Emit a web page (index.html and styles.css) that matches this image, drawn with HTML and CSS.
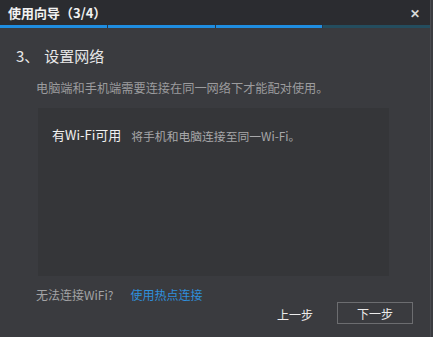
FILE: index.html
```html
<!DOCTYPE html>
<html lang="zh-CN">
<head>
    <meta charset="UTF-8">
    <meta name="viewport" content="width=device-width, initial-scale=1.0">
    <title>使用向导</title>
    <link rel="stylesheet" href="styles.css">
</head>
<body>
    <div class="dialog">
        <div class="titlebar">
            <span class="title">使用向导（3/4）</span>
            <span class="close">✕</span>
        </div>
        <div class="progress">
            <div class="step done"></div>
            <div class="step done"></div>
            <div class="step done"></div>
            <div class="step"></div>
        </div>
        <div class="content">
            <div class="heading"><span class="num">3、</span>设置网络</div>
            <div class="desc">电脑端和手机端需要连接在同一网络下才能配对使用。</div>
            <div class="panel">
                <div class="option">
                    <span class="option-title">有Wi-Fi可用</span>
                    <span class="option-text">将手机和电脑连接至同一Wi-Fi。</span>
                </div>
            </div>
            <div class="help">无法连接WiFi?<a class="link" href="#">使用热点连接</a></div>
            <div class="actions">
                <button class="btn btn-plain">上一步</button>
                <button class="btn btn-box">下一步</button>
            </div>
        </div>
    </div>
</body>
</html>
```

FILE: styles.css
```css
body {
    margin: 0;
    background-color: #3a3b3f;
    font-family: "Noto Sans CJK SC", "Noto Sans", sans-serif;
    color: #e6e6e6;
}
.dialog {
    width: 430px;
    height: 337px;
    border-right: 1px solid #4a4b50;
    background-color: #3a3b3f;
}
.titlebar {
    height: 25px;
    background-color: #2b2c30;
    display: flex;
    align-items: center;
    justify-content: space-between;
    padding: 0 8px 0 8px;
}
.title {
    font-size: 13px;
    font-weight: bold;
    color: #f2f2f2;
    line-height: 25px;
}
.close {
    font-size: 12px;
    font-weight: bold;
    color: #d8d8d8;
    margin-right: 2px;
}
.progress {
    display: grid;
    grid-template-columns: repeat(4, 1fr);
    gap: 1px;
    height: 3px;
    background-color: #27384a;
}
.step {
    background-color: #244d5e;
}
.step.done {
    background-color: #1f8de0;
}
.content {
    padding: 18px 17px 0 16px;
}
.heading {
    font-size: 15px;
    line-height: 20px;
    color: #e8e8e8;
}
.num {
    margin-right: 5px;
}
.desc {
    margin: 14px 0 0 20px;
    font-size: 12.2px;
    line-height: 16px;
    color: #9c9c9e;
}
.panel {
    margin: 12px 0 0 22px;
    width: 351px;
    height: 168px;
    background-color: #353639;
}
.option {
    padding: 17px 0 0 14px;
    display: flex;
    align-items: center;
}
.option-title {
    font-size: 13px;
    line-height: 20px;
    color: #f0f0f0;
    margin-right: 10px;
}
.option-text {
    font-size: 11.8px;
    color: #a8a8aa;
}
.help {
    margin: 11px 0 0 20px;
    font-size: 12px;
    line-height: 16px;
    color: #a3a3a5;
}
.link {
    color: #2f8fdc;
    text-decoration: none;
    margin-left: 17px;
}
.actions {
    display: flex;
    justify-content: flex-end;
    align-items: center;
    margin: -1px 0 0 0;
}
.btn {
    font-family: inherit;
    font-size: 12px;
    color: #ececec;
    background: none;
    cursor: pointer;
}
.btn-plain {
    border: none;
    padding: 0;
    margin-right: 24px;
    position: relative;
    top: 1px;
}
.btn-box {
    width: 76px;
    height: 22px;
    border: 1px solid #6c6d70;
    padding: 0;
}
```
